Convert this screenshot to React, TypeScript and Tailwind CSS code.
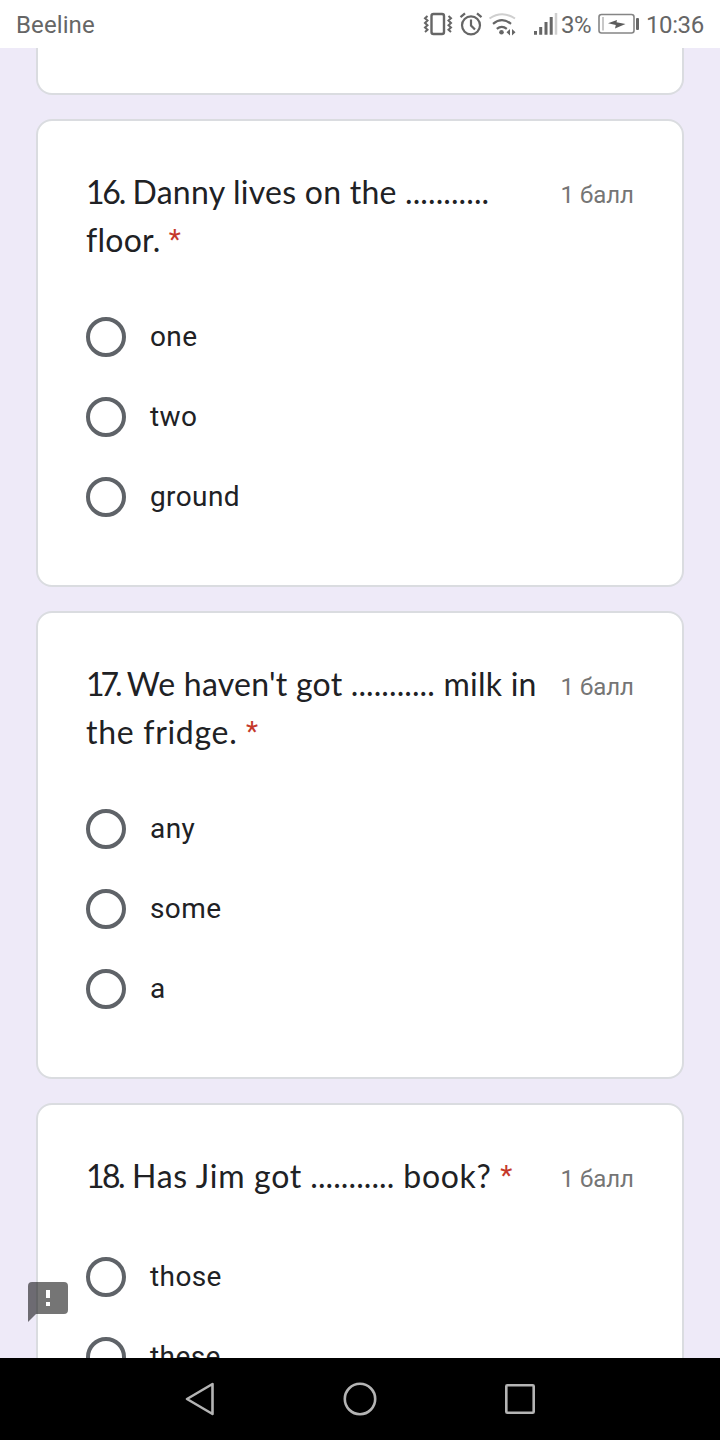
type Question = {
  number: string;
  numberClass: string;
  lines: { before: string; dots?: boolean; after?: string; className?: string }[];
  options: string[];
};

const questions: Question[] = [
  {
    number: "16.",
    numberClass: "tracking-[-2.2px]",
    lines: [{ before: "Danny lives on the", dots: true }, { before: "floor." }],
    options: ["one", "two", "ground"],
  },
  {
    number: "17.",
    numberClass: "tracking-[-4px]",
    lines: [
      { before: "We haven't got", dots: true, after: "milk in" },
      { before: "the fridge.", className: "tracking-[0.7px]" },
    ],
    options: ["any", "some", "a"],
  },
  {
    number: "18.",
    numberClass: "tracking-[-2.5px]",
    lines: [{ before: "Has Jim got", dots: true, after: "book?", className: "tracking-[0.7px]" }],
    options: ["those", "these"],
  },
];

function StatusBar() {
  return (
    <header className="flex h-12 shrink-0 items-center bg-white px-4 text-2xl text-[#666666]">
      <span className="flex-1 pt-0.5 tracking-[0.1px]">Beeline</span>

      {/* Vibrate, alarm, wifi and signal */}
      <svg width="138" height="32" viewBox="0 0 138 32" fill="none" stroke="#666666" className="mr-px">
        <rect x="9.5" y="6" width="12.5" height="20" rx="2" strokeWidth="2.4" />
        <path d="M5.5 8L3 10.300l2.500 2.300L3 14.900l2.500 2.300L3 19.500l2.500 2.300-2.500 2.200M26.500 8l2.500 2.300-2.500 2.300 2.500 2.300-2.500 2.300 2.500 2.300-2.500 2.300 2.500 2.200" strokeWidth="2" />
        <circle cx="49" cy="17.300" r="9" strokeWidth="2.2" />
        <path d="M49 11.500v6l4 4M38.500 9.200l4.500-3.900M59.500 9.200l-4.500-3.900" strokeWidth="2.2" />
        <path d="M67.500 10.500q12.700-8.500 25.500 0" stroke="#cfcfcf" strokeWidth="2" />
        <path d="M71 15.800q9-7.500 18 0M74.800 20.800q5-4 10 0" strokeWidth="2.200" />
        <circle cx="79.500" cy="24.300" r="2.300" fill="#666666" stroke="none" />
        <path d="M88 21v6.500l-3.500-3.200zM90 21v6.500l3.500-3.200z" fill="#666666" stroke="none" />
        <path d="M113.500 26.700V23M118.700 26.700V19M124 26.700V14M129.200 26.700V9" strokeWidth="3" />
        <path d="M134 26.700V5" stroke="#cfcfcf" strokeWidth="2.500" />
      </svg>
      <span className="w-[37px] pt-0.5 tracking-[-0.6px]">3%</span>

      {/* Charging battery */}
      <svg width="42" height="24" viewBox="0 0 42 24" className="mr-1.5">
        <rect x="1" y="2.500" width="35" height="18.500" rx="2.500" fill="none" stroke="#858585" strokeWidth="1.600" />
        <path d="M5 5v13.500" stroke="#c8c8c8" strokeWidth="2" />
        <path d="M10 11.300l9-3.300-.5 2.300 9 1.700-10.500 4.500.8-3.500z" fill="#5c5c5c" />
        <rect x="38" y="6" width="3" height="12" rx="1" fill="#666666" />
      </svg>
      <span className="w-[58px] pt-0.5 whitespace-nowrap tracking-[-0.4px]">10:36</span>
    </header>
  );
}

function QuestionCard({ question }: { question: Question }) {
  return (
    <section className="shrink-0 rounded-2xl border-2 border-[#dadce0] bg-white px-12 pt-[47px] pb-12">
      <div className="flex min-h-[52px] justify-between">
        <h2 className="font-['Lato','Liberation_Sans',sans-serif] text-[32px] leading-[48px] tracking-[0.25px] whitespace-nowrap text-[#202124]">
          {question.lines.map((line, i) => (
            <span key={i} className={`block ${line.className ?? ""}`}>
              {i === 0 && (
                <>
                  <span className={question.numberClass}>{question.number}</span>{" "}
                </>
              )}
              {line.before}
              {line.dots && <span className="tracking-[0.1px]"> ...........</span>}
              {line.after && <span> {line.after}</span>}
              {i === question.lines.length - 1 && (
                <span className="ml-px align-[3px] font-['Roboto',sans-serif] text-[28px] leading-none text-[#c5392b]"> *</span>
              )}
            </span>
          ))}
        </h2>
        <span className="pt-[9px] text-2xl leading-9 whitespace-nowrap text-[#757575]">1 балл</span>
      </div>

      <div className="mt-[33px] flex flex-col">
        {question.options.map((option) => (
          <label key={option} className="flex h-20 items-center gap-6 text-[28px] tracking-[0.4px] text-[#202124]">
            <input type="radio" className="size-10 appearance-none rounded-full border-4 border-[#5f6368]" />
            {option}
          </label>
        ))}
      </div>
    </section>
  );
}

function NavigationBar() {
  return (
    <nav className="flex h-[82px] shrink-0 items-center justify-center gap-[120px] bg-black">
      <svg width="40" height="40" viewBox="0 0 40 40" fill="none" stroke="#b4b4b4" strokeWidth="2.600" strokeLinejoin="round">
        <path d="M7 20L32.500 5v30z" />
      </svg>
      <svg width="40" height="40" viewBox="0 0 40 40" fill="none" stroke="#b4b4b4" strokeWidth="2.600">
        <circle cx="20" cy="20" r="15.200" />
      </svg>
      <svg width="40" height="40" viewBox="0 0 40 40" fill="none" stroke="#b4b4b4" strokeWidth="2.600">
        <rect x="6.300" y="6.300" width="27.400" height="27.400" rx="1" />
      </svg>
    </nav>
  );
}

export default function App() {
  return (
    <div className="relative flex h-[1440px] w-[720px] flex-col overflow-hidden bg-[#eeeaf8] font-['Roboto',sans-serif]">
      <StatusBar />
      <main className="flex min-h-0 flex-1 flex-col gap-6 overflow-hidden px-9">
        {/* End of the previous question */}
        <div className="h-[47px] shrink-0 rounded-b-2xl border-2 border-t-0 border-[#dadce0] bg-white" />
        {questions.map((question, i) => (
          <QuestionCard key={i} question={question} />
        ))}
      </main>
      <NavigationBar />

      <button aria-label="Report a problem" className="absolute top-[1282px] left-7">
        <svg width="40" height="40" viewBox="0 0 40 40">
          <path d="M4 0h32a4 4 0 0 1 4 4v24a4 4 0 0 1-4 4H8l-8 8V4a4 4 0 0 1 4-4z" fill="#000" fillOpacity=".54" />
          <path d="M18 8h4v8h-4zM18 20h4v4h-4z" fill="#fff" />
        </svg>
      </button>
    </div>
  );
}
